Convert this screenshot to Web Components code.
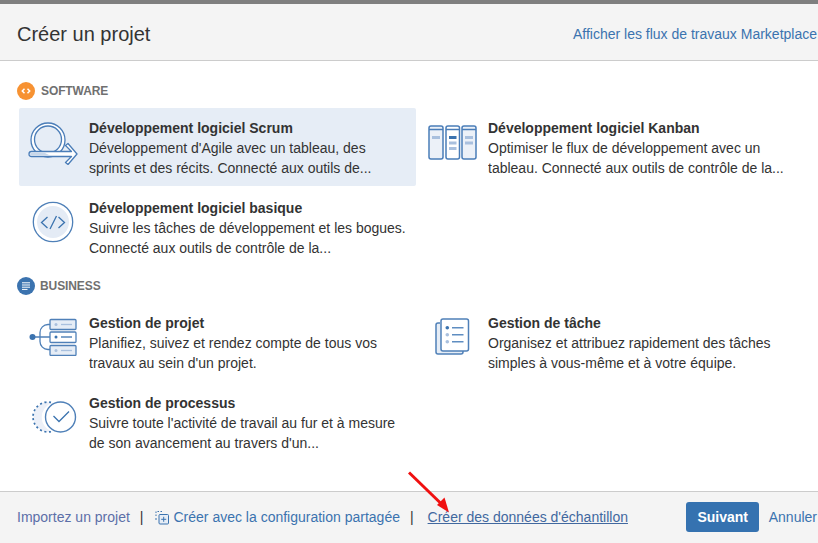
<!DOCTYPE html>
<html lang="fr"><head><meta charset="utf-8"><title>Créer un projet</title>
<style>
html,body{margin:0;padding:0;width:818px;height:543px;overflow:hidden;background:#fff}
body{font:14px/20px "Liberation Sans",Arial,sans-serif;color:#333}
svg{display:block}
</style></head><body>
<create-dialog>
  <dialog-header slot="header" heading="Créer un projet" link="Afficher les flux de travaux Marketplace"></dialog-header>

  <project-section label="SOFTWARE" color="#f79232" kind="code">
    <project-card selected heading="Développement logiciel Scrum">
      <svg slot="icon" width="50" height="46" viewBox="0 0 50 46" fill="none" stroke="#4a7db8" stroke-width="1.300" stroke-linejoin="round">
        <circle cx="20" cy="21" r="17" fill="#fff"/>
        <circle cx="20" cy="20.500" r="13.500" fill="#e6edf6"/>
        <path d="M3.500 32.500H43.500L37.500 26.500 40 24.500 49 35 40 45.500 37.500 43.500 43.500 37.500H3.500a2.500 2.500 0 0 1 0-5z" fill="#fff"/>
        <path d="M3.500 33.500H16l6 3H3.500a1.500 1.500 0 0 1 0-3z" fill="#c9d8ea" stroke="none"/>
      </svg>
      Développement d'Agile avec un tableau, des sprints et des récits. Connecté aux outils de...
    </project-card>
    <project-card heading="Développement logiciel Kanban">
      <svg slot="icon" width="49" height="35" viewBox="0 0 49 35" fill="none" stroke="#4a7db8" stroke-width="1.500">
        <rect x="1" y="1" width="14" height="33" rx="2" fill="#ecf1f8"/><path d="M1 4.500h14"/>
        <rect x="18" y="1" width="13.500" height="33" rx="2" fill="#fff"/><path d="M18 4.500h13.500"/>
        <rect x="34" y="1" width="14" height="33" rx="2" fill="#ecf1f8"/><path d="M34 4.500h14"/>
        <g stroke="none">
          <rect x="4" y="11" width="8" height="3" fill="#a9c0de"/>
          <rect x="21" y="11" width="7.500" height="3" fill="#3b73af"/>
          <rect x="21" y="16.500" width="7.500" height="3" fill="#a9c0de"/>
          <rect x="21" y="22" width="7.500" height="3" fill="#a9c0de"/>
          <rect x="37" y="11" width="8" height="3" fill="#a9c0de"/>
          <rect x="37" y="16.500" width="8" height="3" fill="#a9c0de"/>
        </g>
      </svg>
      Optimiser le flux de développement avec un tableau. Connecté aux outils de contrôle de la...
    </project-card>
    <project-card heading="Développement logiciel basique">
      <svg slot="icon" width="42" height="42" viewBox="0 0 42 42" fill="none" stroke="#3b73af">
        <circle cx="21" cy="21" r="19.700" stroke-width="1.300" stroke="#4f80b8"/>
        <circle cx="21" cy="21" r="16" fill="#e4ebf5" stroke="none"/>
        <path d="M15.500 16l-6 5.500 6 5.500M26.500 16l6 5.500-6 5.500M24.500 15l-6.500 13" stroke-width="1.300"/>
      </svg>
      Suivre les tâches de développement et les bogues. Connecté aux outils de contrôle de la...
    </project-card>
  </project-section>

  <project-section label="BUSINESS" color="#3b73af" kind="list" gap="5">
    <project-card heading="Gestion de projet">
      <svg slot="icon" width="50" height="38" viewBox="0 0 50 38" fill="none" stroke="#4f80b8" stroke-width="1.300">
        <path d="M4.500 19H22M22 6.500h-2a8 8 0 0 0-8 8v9a8 8 0 0 0 8 8h2"/>
        <circle cx="4.500" cy="19" r="3" fill="#3b73af" stroke="none"/>
        <rect x="22" y="1.500" width="26" height="10" rx="1" fill="#e6edf6"/>
        <rect x="22" y="14" width="26" height="10.500" rx="1" fill="#fff"/>
        <rect x="22" y="27.500" width="26" height="10" rx="1" fill="#e6edf6"/>
        <g stroke="none"><circle cx="28" cy="6.500" r="1.500" fill="#a9c0de"/><circle cx="28" cy="19" r="1.500" fill="#3b73af"/><circle cx="28" cy="32.500" r="1.500" fill="#a9c0de"/></g>
        <path d="M33 6.500h11" stroke="#a9c0de"/><path d="M33 19h11" stroke="#3b73af"/><path d="M33 32.500h11" stroke="#a9c0de"/>
      </svg>
      Planifiez, suivez et rendez compte de tous vos travaux au sein d'un projet.
    </project-card>
    <project-card heading="Gestion de tâche">
      <svg slot="icon" width="35" height="38" viewBox="0 0 35 38" fill="none" stroke="#4f80b8" stroke-width="1.500">
        <path d="M5 5H3a2 2 0 0 0-2 2v27a2 2 0 0 0 2 2h23a2 2 0 0 0 2-2v-2" fill="#e6edf6"/>
        <rect x="6" y="1" width="27.500" height="32" rx="2" fill="#fff"/>
        <g stroke="none"><circle cx="12.300" cy="9.700" r="1.800" fill="#3b73af"/><circle cx="12.300" cy="16.700" r="1.800" fill="#a9c0de"/><circle cx="12.300" cy="23.700" r="1.800" fill="#a9c0de"/></g>
        <path d="M17 9.700h11.500M17 16.700h11.500M17 23.700h11.500" stroke="#5f8dc1"/>
      </svg>
      Organisez et attribuez rapidement des tâches simples à vous-même et à votre équipe.
    </project-card>
    <project-card heading="Gestion de processus">
      <svg slot="icon" width="47" height="32" viewBox="0 0 47 32" fill="none" stroke="#3b73af">
        <path d="M17 1a15 15 0 1 0 5 29.500 15 15 0 0 1 0-28.500 15 15 0 0 0-5-1z" fill="#ecf0f8" stroke="none"/>
        <path d="M21 1.300A15 15 0 1 0 21 30.700" stroke-width="1.700" stroke-dasharray="2 2.600"/>
        <circle cx="30.500" cy="16" r="15" stroke-width="1.400" stroke="#4f80b8" fill="#fff"/>
        <path d="M23.500 15l5.500 5.500 10-10" stroke-width="1.300"/>
      </svg>
      Suivre toute l'activité de travail au fur et à mesure de son avancement au travers d'un...
    </project-card>
  </project-section>

  <dialog-footer slot="footer"></dialog-footer>

  <svg slot="overlay" width="48" height="48" viewBox="0 0 48 48" fill="none">
    <path d="M2 2.500l33 32" stroke="#f01010" stroke-width="3"/>
    <path d="M42 42.500l-12-7.500 7.500-7.500z" fill="#f01010"/>
  </svg>
</create-dialog>

<script>
const def = (name, html, setup) => customElements.define(name, class extends HTMLElement {
  constructor(){ super(); this.attachShadow({mode:'open'}).innerHTML = html; }
  connectedCallback(){ setup && setup(this, this.shadowRoot); }
});

def('create-dialog', `<style>
  :host{display:flex;flex-direction:column;width:818px;height:543px;position:relative;overflow:hidden;border-top:4px solid #7f7f7f;box-sizing:border-box;background:#fff}
  main{flex:1;padding:21px 0 0 17px;display:flex;flex-direction:column;min-height:0}
  .overlay{position:absolute;left:407px;top:466px}
  </style><slot name="header"></slot><main><slot></slot></main><slot name="footer"></slot><div class="overlay"><slot name="overlay"></slot></div>`);

def('dialog-header', `<style>
  :host{display:flex;justify-content:space-between;align-items:center;flex:none;height:57px;padding:4px 1px 0 17px;box-sizing:border-box;background:#f4f4f4;border-bottom:1px solid #ccc}
  h1{margin:0;font:20px/28px "Liberation Sans",Arial,sans-serif;color:#333}
  a{color:#3b73af;text-decoration:none;font-size:14px;white-space:nowrap}
  </style><h1></h1><a href="#"></a>`, (el,s)=>{
    s.querySelector('h1').textContent = el.getAttribute('heading');
    s.querySelector('a').textContent = el.getAttribute('link');
  });

const glyphs = {
  code:'<path d="M7.500 6.800L5.300 9l2.200 2.200M10.500 6.800L12.700 9l-2.200 2.200" stroke="#fff" stroke-width="1.500" fill="none"/>',
  list:'<path d="M5 5.800h8M5 8h8M5 10.200h8M5 12.400h5.500" stroke="#fff" stroke-width="1" fill="none"/>'
};
def('project-section', `<style>
  :host{display:block;margin-bottom:9px}
  header{display:flex;align-items:center;gap:6px;height:18px;font:bold 12px/18px "Liberation Sans",Arial,sans-serif;color:#707070;letter-spacing:-.1px}
  .cards{display:grid;grid-template-columns:399px 399px;grid-auto-rows:80px;margin:8px 0 0 2px}
  svg{display:block}
  </style><header><span class="dot"></span><span class="lbl"></span></header><div class="cards"><slot></slot></div>`, (el,s)=>{
    s.querySelector('.lbl').textContent = el.getAttribute('label');
    if (el.hasAttribute('gap')) s.querySelector('header').style.gap = el.getAttribute('gap') + 'px';
    s.querySelector('.dot').innerHTML = '<svg width="18" height="18" viewBox="0 0 18 18"><circle cx="9" cy="9" r="9" fill="'+el.getAttribute('color')+'"/>'+glyphs[el.getAttribute('kind')]+'</svg>';
  });

def('project-card', `<style>
  :host{display:grid;grid-template-columns:70px 1fr;width:397px;height:78px;box-sizing:border-box;border-radius:2px;font:14px/20px "Liberation Sans",Arial,sans-serif;color:#333}
  :host([selected]){background:#e6edf6}
  .ic{display:flex;align-items:center;justify-content:center;padding-right:2px;height:68px;box-sizing:border-box}
  .tx{padding:10px 0 0 0;overflow:hidden}
  h3{margin:0;font:bold 14px/20px "Liberation Sans",Arial,sans-serif;color:#333}
  p{margin:0;width:318px}
  </style><div class="ic"><slot name="icon"></slot></div><div class="tx"><h3></h3><p><slot></slot></p></div>`, (el,s)=>{
    s.querySelector('h3').textContent = el.getAttribute('heading');
  });

def('dialog-footer', `<style>
  :host{display:flex;align-items:center;flex:none;height:52px;padding:0 0 1px 17px;box-sizing:border-box;background:#f4f4f4;border-top:1px solid #ccc;font:14px/20px "Liberation Sans",Arial,sans-serif;white-space:nowrap}
  a{color:#3b73af;text-decoration:none}
  .imp{color:#5c6fa8}
  .sep{color:#333;margin:0 12px 0 10px}
  .sep2{margin:0 14px 0 10px}
  .shared{display:flex;align-items:center;gap:4px}
  .u{text-decoration:underline;color:#41689f}
  .sp{flex:1}
  button{height:30px;width:73px;border:0;border-radius:3px;background:#3572b0;color:#fff;font:bold 14px "Liberation Sans",Arial,sans-serif;padding:0 0 0 1px;margin-right:10px}
  .cancel{margin-right:1px}
  </style>
  <a class="imp" href="#">Importez un projet</a><span class="sep">|</span>
  <a class="shared" href="#"><svg width="14" height="15" viewBox="0 0 14 15" fill="none" stroke="#3b73af" style="display:block"><path d="M1 6V1.500h6" stroke-dasharray="1.500 1.500"/><path d="M1 8v2"/><rect x="4" y="4.500" width="9.500" height="9.500" rx="1" fill="#e6edf6"/><path d="M8.700 6.800v5M6.200 9.300h5"/></svg>Créer avec la configuration partagée</a><span class="sep sep2">|</span>
  <a class="u" href="#">Créer des données d'échantillon</a><span class="sp"></span>
  <button>Suivant</button><a class="cancel" href="#">Annuler</a>`);
</script>
</body></html>
